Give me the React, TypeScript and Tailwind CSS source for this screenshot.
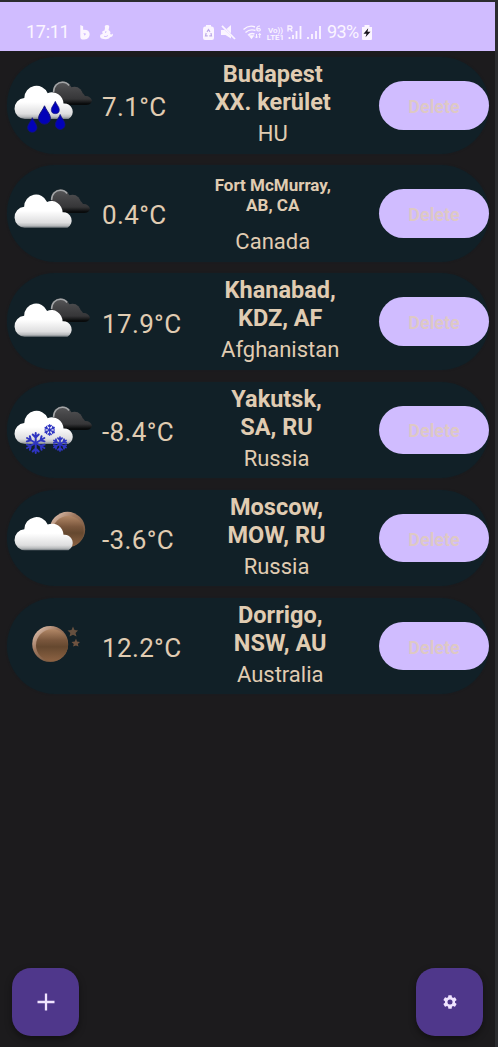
import React from "react";

type Sky = "rain" | "cloudy" | "snow" | "partly" | "clear";

type City = { temp: string; name: string[]; country: string; sky: Sky; small?: boolean };

const cities: City[] = [
  { temp: "7.1°C", name: ["Budapest", "XX. kerület"], country: "HU", sky: "rain" },
  { temp: "0.4°C", name: ["Fort McMurray,", "AB, CA"], country: "Canada", sky: "cloudy", small: true },
  { temp: "17.9°C", name: ["Khanabad,", "KDZ, AF"], country: "Afghanistan", sky: "cloudy" },
  { temp: "-8.4°C", name: ["Yakutsk,", "SA, RU"], country: "Russia", sky: "snow" },
  { temp: "-3.6°C", name: ["Moscow,", "MOW, RU"], country: "Russia", sky: "partly" },
  { temp: "12.2°C", name: ["Dorrigo,", "NSW, AU"], country: "Australia", sky: "clear" },
];

function Drop({ x, y, s }: { x: number; y: number; s: number }) {
  return (
    <path
      transform={`translate(${x} ${y}) scale(${s})`}
      d="M0 -10C1.500 -5.500 6.500 -1 6.500 3.500A6.500 6.500 0 0 1 -6.500 3.500C-6.500 -1 -1.500 -5.500 0 -10Z"
      fill="#0202b8"
      stroke="#141478"
      strokeWidth="1"
    />
  );
}

function Flake({ x, y, r, w }: { x: number; y: number; r: number; w: number }) {
  return (
    <g transform={`translate(${x} ${y}) scale(${r / 10})`} stroke="#2f35c2" strokeWidth={w} strokeLinecap="round" fill="none">
      {[0, 60, 120, 180, 240, 300].map((a) => (
        <path key={a} transform={`rotate(${a})`} d="M0 0V-10M-3 -8.500L0 -5.500L3 -8.500" />
      ))}
    </g>
  );
}

function WeatherIcon({ sky, id }: { sky: Sky; id: number }) {
  const white = `white-${id}`;
  const dark = `dark-${id}`;
  const moon = `moon-${id}`;
  const rim = `rim-${id}`;
  return (
    <svg viewBox="0 0 95 96" className="h-24 w-[95px] shrink-0">
      <defs>
        <linearGradient id={white} gradientUnits="userSpaceOnUse" x1="0" y1="28" x2="0" y2="62">
          <stop offset="0.5" stopColor="#ffffff" />
          <stop offset="0.85" stopColor="#dededf" />
          <stop offset="0.94" stopColor="#b9bbbd" />
          <stop offset="1" stopColor="#72797e" />
        </linearGradient>
        <linearGradient id={dark} gradientUnits="userSpaceOnUse" x1="0" y1="24" x2="0" y2="48">
          <stop offset="0" stopColor="#58585a" />
          <stop offset="0.35" stopColor="#464648" />
          <stop offset="0.75" stopColor="#363638" />
          <stop offset="0.95" stopColor="#080a0b" />
        </linearGradient>
        <linearGradient id={moon} x1="0" y1="0" x2="0" y2="1">
          <stop offset="0" stopColor="#b18766" />
          <stop offset="0.35" stopColor="#79563c" />
          <stop offset="0.55" stopColor="#65482f" />
          <stop offset="1" stopColor="#8c6243" />
        </linearGradient>
        <linearGradient id={rim} x1="0" y1="0" x2="0.7" y2="0.8">
          <stop offset="0" stopColor="#f0d5c4" />
          <stop offset="0.5" stopColor="#a07960" />
          <stop offset="1" stopColor="#79583f" />
        </linearGradient>
      </defs>
      {sky === "clear" ? (
        <g>
          <circle cx="43.200" cy="46" r="18" fill={`url(#${rim})`} />
          <circle cx="45" cy="47.200" r="16" fill={`url(#${moon})`} />
          <path d="M66 28.500L67.500 32L71 32.500L68.500 35L69.500 38.500L66 36.700L62.500 38.500L63.300 35L60.500 32.500L64.500 32Z" fill="#66503f" />
          <path d="M69 40.500L70 43.500L73 44L70.800 46L71.500 48.500L69 47.500L66 48.500L66.800 46L64.500 44L67.800 43.500Z" fill="#6f5340" />
        </g>
      ) : (
        <g>
          {sky === "partly" ? (
            <g>
              <circle cx="60.500" cy="39.500" r="17.700" fill={`url(#${rim})`} />
              <circle cx="61.200" cy="41.500" r="15.500" fill={`url(#${moon})`} />
            </g>
          ) : (
            <g transform={sky === "cloudy" ? "translate(-2 0)" : undefined} fill={`url(#${dark})`}>
              <circle cx="55.500" cy="34" r="9.700" />
              <circle cx="67.500" cy="38" r="8.300" />
              <path d="M71 36Q76 34.500 78 39Q83 38.500 85 43.500Q84 48 79 48H58L50 38Z" />
              <path d="M46.600 35C46.600 28.500 51 25.200 55.500 25.200C58 25.200 60.500 26 62 28.500" fill="none" stroke="#a3a5a7" strokeWidth="1.500" />
            </g>
          )}
          <g
            fill={`url(#${white})`}
            transform={sky === "partly" ? "translate(0 -1.700)" : sky === "cloudy" ? "translate(0.200 0.700) scale(0.98 1)" : undefined}
          >
            <path d="M18.300 62A10.300 10.500 0 0 1 17.300 41A12.200 12.200 0 0 1 40.700 36.200A11.500 11.500 0 0 1 56.500 46.500A8.300 8.300 0 0 1 61.500 62Z" />
          </g>
          {sky === "rain" && (
            <g>
              <Drop x={37.5} y={58} s={0.92} />
              <Drop x={48.3} y={50.5} s={0.62} />
              <Drop x={25.3} y={68} s={0.73} />
              <Drop x={53.2} y={65} s={0.75} />
            </g>
          )}
          {sky === "snow" && (
            <g>
              <Flake x={28.7} y={61} r={10} w={2} />
              <Flake x={42.7} y={48} r={5.3} w={2.3} />
              <Flake x={53} y={62} r={7} w={2.4} />
            </g>
          )}
        </g>
      )}
    </svg>
  );
}

function StatusBar() {
  return (
    <header className="flex h-[49px] shrink-0 items-start bg-[#d0bcff] pt-[20px] pl-[26px] text-[#fbf5ff]">
      <span className="w-[53px] text-[18px] leading-5 tracking-[-0.3px]">17:11</span>
      <svg viewBox="0 0 12 16" className="mt-[3px] h-[15px] w-[12px]" fill="currentColor">
        <path d="M1 0L4 1.200V5Q10.500 4.500 11 9.500Q11 14.500 5.500 15.500Q1 16 1 12.500ZM4.300 8.500L5.500 11.500L7.300 9.300Z" fillRule="evenodd" />
      </svg>
      <svg viewBox="0 0 13 15" className="mt-[3px] ml-[9px] h-[15px] w-[13px]" fill="currentColor">
        <path d="M5 3Q4 0 7 0Q10 0 9 3L8.500 5Q11.500 7 10 9Q11.500 10 13 8.500Q13 12 10.500 12Q8 15 4 14Q0 14 0 11Q0 9 2.500 9Q3 8 2 7Q2.500 5.500 4.500 5.500Z" />
        <path d="M6 6L5.500 8M4 11.300Q6 12.300 8 10.500" fill="none" stroke="#d0bcff" strokeWidth="0.900" />
      </svg>
      <svg viewBox="0 0 11 15" className="mt-[3px] ml-[90px] h-[15px] w-[11px]" fill="currentColor">
        <path d="M3 0H8V1.500H9Q11 1.500 11 4V13Q11 15 9 15H2Q0 15 0 13V4Q0 1.500 2 1.500H3Z" />
        <path d="M4 6.800L5.500 4.500L7 6.800M8 8L8.500 10.800H6.300M4.700 10.800H2.500L3.200 8" fill="none" stroke="#bdaae8" strokeWidth="1.200" />
      </svg>
      <svg viewBox="0 0 15 15" className="mt-[3px] ml-[7px] h-[15px] w-[15px]" fill="currentColor">
        <path d="M0 5H3.500L10 11V13.500L4.500 10H0ZM5.500 4L10 0V8.200Z" />
        <path d="M1 0.800L14 14" stroke="currentColor" strokeWidth="1.700" />
      </svg>
      <svg viewBox="0 0 19 15" className="mt-[3px] ml-[7px] h-[15px] w-[19px]" fill="none" stroke="currentColor" strokeWidth="1.400">
        <path d="M0.500 4.500Q6 -0.500 12 2M2.500 7.500Q7 3.500 12.500 5.500M5 10.300Q8 7.500 11.500 9" />
        <path d="M7 11L8.500 13L10 11Z" fill="currentColor" />
        <path d="M17 1Q13.700 1 13.700 4Q13.700 6 15.500 6Q17.500 6 17.300 4.500Q17 3 14 4" strokeWidth="1.100" />
        <path d="M13.500 9V13M12 11.500L13.500 13L14.700 11.500M16.700 13V8.500M15.500 10L16.700 8.500L18 10" strokeWidth="1" />
      </svg>
      <div className="mt-[5px] ml-[4px] w-[19px] text-center text-[8px] leading-[7px] font-semibold">
        <div>Vo))</div>
        <div>LTE1</div>
      </div>
      <svg viewBox="0 0 15 15" className="mt-[3px] ml-[2px] h-[15px] w-[15px]" fill="none" stroke="currentColor">
        <path d="M1 6.500V1H3.300Q5 1 5 2.400Q5 4 3.300 4H1M3.300 4L5.300 6.500" strokeWidth="1.300" />
        <path d="M2.500 12V14M6 10V14M9.500 6V14M13.500 1V14" strokeWidth="1.800" />
      </svg>
      <svg viewBox="0 0 14 15" className="mt-[3px] ml-[5px] h-[15px] w-[14px]" fill="none" stroke="currentColor" strokeWidth="1.800">
        <path d="M1 12V14M5 9V14M9 6V14M13 1V14" />
      </svg>
      <span className="ml-[6px] w-[33px] text-[18px] leading-5 tracking-[-0.600px]">93%</span>
      <svg viewBox="0 0 10 15" className="mt-[3px] ml-[2px] h-[15px] w-[10px]">
        <path d="M2.500 0H7.500V2H10V14Q10 15 9 15H1Q0 15 0 14V2H2.500Z" fill="#fbf5ff" />
        <path d="M6.200 3.300L1.500 8.800H4.500L3.500 12.300L8.500 6.700H5.500Z" fill="#18151d" />
      </svg>
    </header>
  );
}

function CityRow({ city, id }: { city: City; id: number }) {
  return (
    <li className="flex h-[96.500px] items-center rounded-[48px] bg-[#112027] shadow-[0_0_2px_rgba(17,32,39,0.5)]">
      <WeatherIcon sky={city.sky} id={id} />
      <span className="shrink-0 pt-[4px] text-[26px] leading-8 tracking-[0.350px]">{city.temp}</span>
      <div className="flex h-full flex-1 flex-col pt-[3px] text-center whitespace-nowrap">
        <div
          className={
            city.small
              ? "h-[60px] pt-[7px] text-[17px] leading-5 font-bold"
              : "h-[60px] text-[23.500px] leading-[28px] font-bold"
          }
        >
          {city.name.map((line) => (
            <div key={line}>{line}</div>
          ))}
        </div>
        <div className="text-[22px] leading-[28px]">{city.country}</div>
      </div>
      <button className="h-[48.500px] w-[110px] shrink-0 rounded-full bg-[#d0bcff] pt-[2px] text-[18px] font-semibold text-[#dec9c4]">
        Delete
      </button>
    </li>
  );
}

export default function App() {
  return (
    <div className="h-[1047px] w-[498px] overflow-hidden bg-[#2b2c2f] pt-[2px] pr-[3px] font-['Roboto',sans-serif]">
      <main className="flex h-[1045px] flex-col bg-[#1c1b1d]">
        <StatusBar />
        <ul className="flex flex-col gap-[11.700px] pt-[6px] pr-[6px] pl-[7px] text-[#e0ccb2]">
          {cities.map((city, i) => (
            <CityRow key={city.country + city.temp} city={city} id={i} />
          ))}
        </ul>
        <footer className="mt-auto flex justify-between pr-[12px] pb-[11.500px] pl-[12px] text-[#f0e4ff]">
          <button aria-label="Add" className="flex h-[67.500px] w-[67px] items-center justify-center rounded-[19px] bg-[#4f378b] shadow-[0_3px_7px_rgba(0,0,0,0.4)]">
            <svg viewBox="0 0 18 18" className="h-[18px] w-[18px]" stroke="currentColor" strokeWidth="2.300">
              <path d="M9 0.500V17.500M0.500 9H17.500" />
            </svg>
          </button>
          <button aria-label="Settings" className="flex h-[67.500px] w-[67px] items-center justify-center rounded-[19px] bg-[#4f378b] shadow-[0_3px_7px_rgba(0,0,0,0.4)]">
            <svg viewBox="2 2 20 20" className="h-[14px] w-[14px]" fill="currentColor">
              <path d="M19.140 12.940c.040-.300.060-.610.060-.940s-.020-.640-.070-.940l2.030-1.580a.490.490 0 0 0 .120-.610l-1.920-3.320a.490.490 0 0 0-.590-.220l-2.390.960c-.500-.380-1.030-.700-1.620-.940L14.400 2.810a.480.480 0 0 0-.480-.410h-3.840a.480.480 0 0 0-.470.410L9.250 5.350c-.590.240-1.130.570-1.620.940l-2.390-.960a.490.490 0 0 0-.590.220L2.740 8.870a.480.480 0 0 0 .120.610l2.030 1.580c-.050.300-.090.630-.090.940s.020.640.070.940l-2.030 1.580a.490.490 0 0 0-.120.610l1.920 3.320c.120.220.370.290.590.220l2.390-.960c.500.380 1.030.700 1.620.940l.360 2.540c.050.240.240.410.480.410h3.840c.240 0 .440-.170.470-.410l.360-2.540c.590-.240 1.130-.560 1.620-.940l2.390.960c.220.080.470 0 .590-.220l1.920-3.320a.480.480 0 0 0-.120-.610ZM12 15.600a3.600 3.600 0 1 1 0-7.200 3.600 3.600 0 0 1 0 7.200Z" />
            </svg>
          </button>
        </footer>
      </main>
    </div>
  );
}
